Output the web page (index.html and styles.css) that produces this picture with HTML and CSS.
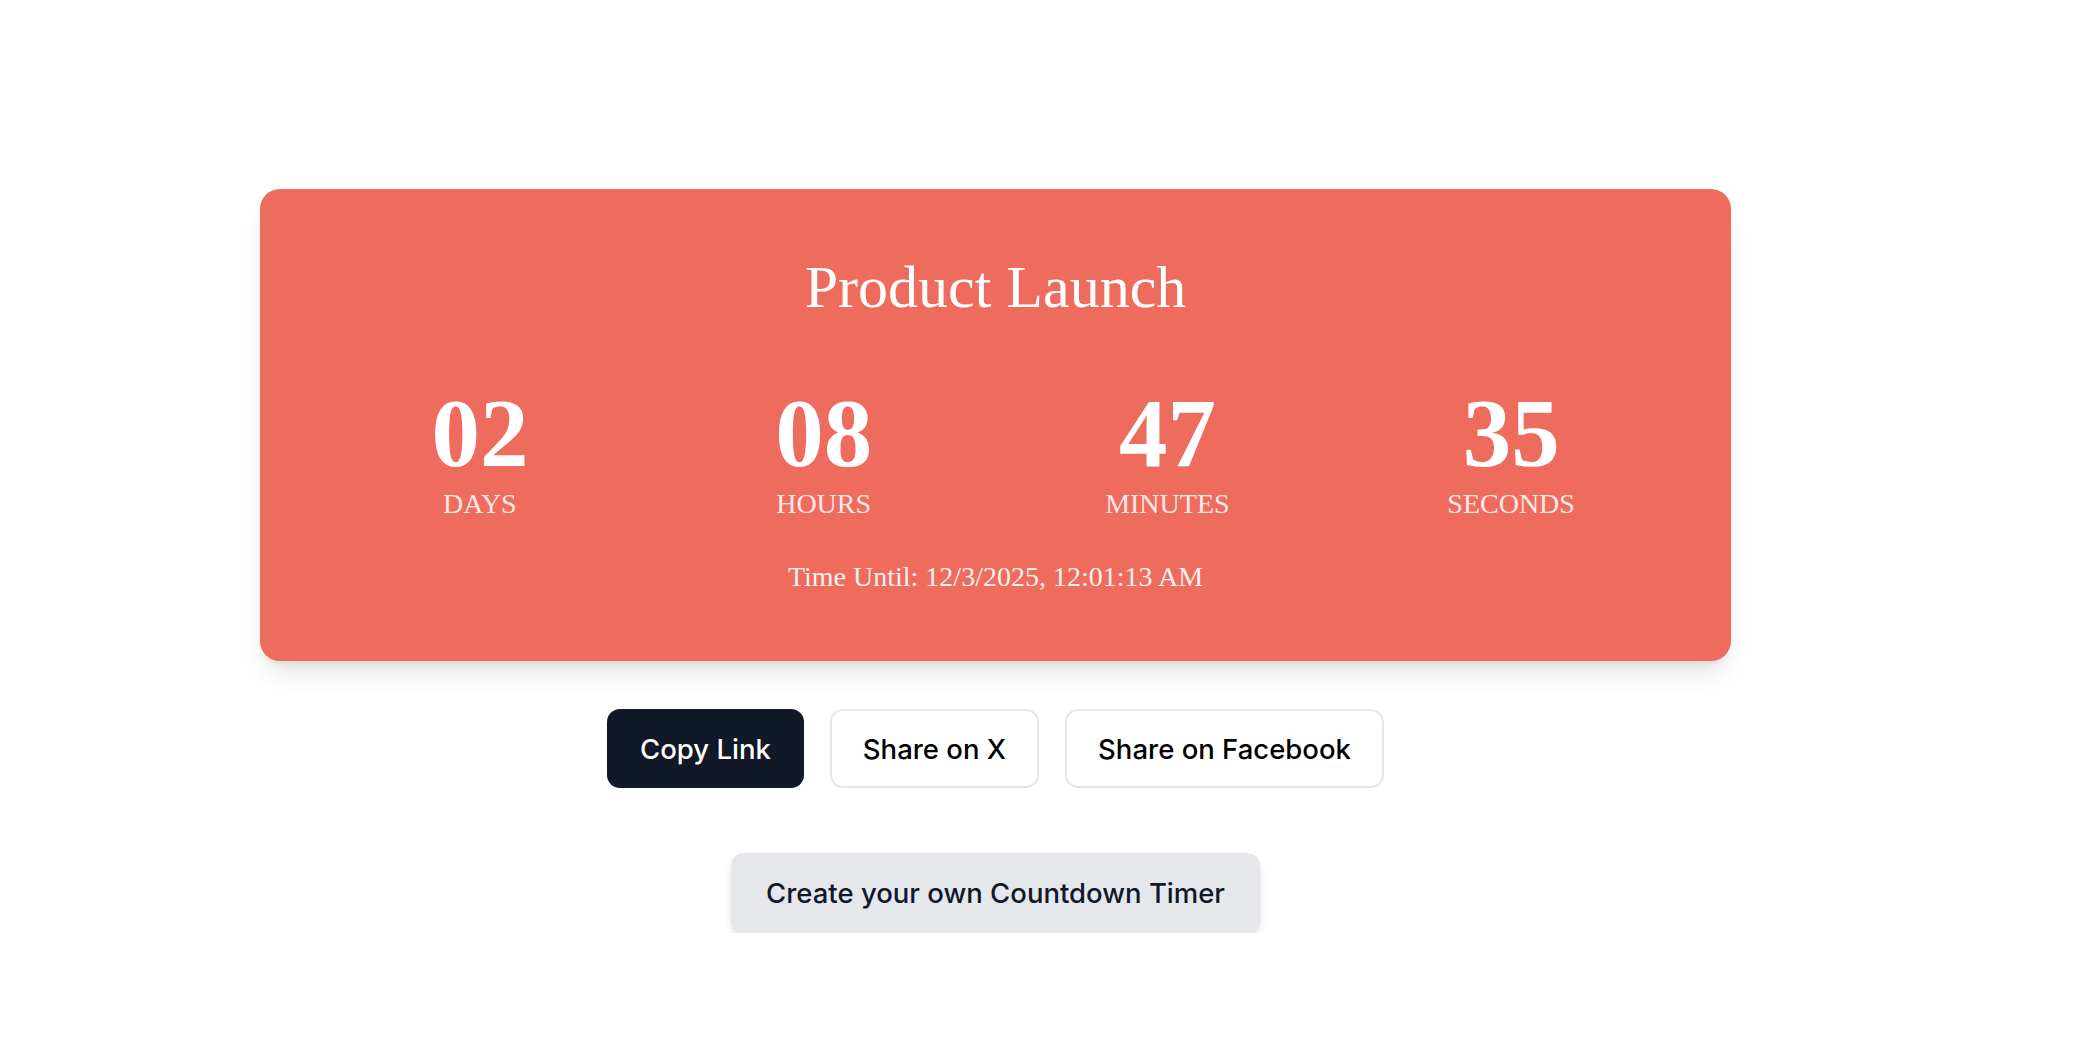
FILE: index.html
```html
<!DOCTYPE html>
<html lang="en">
<head>
    <meta charset="UTF-8">
    <meta name="viewport" content="width=device-width, initial-scale=1.0">
    <title>Product Launch Countdown</title>
    <link rel="stylesheet" href="styles.css">
</head>
<body>
    <div class="page">
        <div class="countdown-card">
            <h1 class="title">Product Launch</h1>

            <div class="units">
                <div class="unit">
                    <span class="value">02</span>
                    <span class="label">DAYS</span>
                </div>
                <div class="unit">
                    <span class="value">08</span>
                    <span class="label">HOURS</span>
                </div>
                <div class="unit">
                    <span class="value">47</span>
                    <span class="label">MINUTES</span>
                </div>
                <div class="unit">
                    <span class="value">35</span>
                    <span class="label">SECONDS</span>
                </div>
            </div>

            <p class="target">Time Until: 12/3/2025, 12:01:13 AM</p>
        </div>

        <div class="share-row">
            <button class="btn btn-dark">Copy Link</button>
            <button class="btn btn-outline">Share on X</button>
            <button class="btn btn-outline">Share on Facebook</button>
        </div>

        <a class="btn btn-create" href="#">Create your own Countdown Timer</a>
    </div>
</body>
</html>
```

FILE: styles.css
```css
body {
    margin: 0;
    padding: 0;
    background-color: white;
    font-family: Inter, "Liberation Sans", sans-serif;
}

.page {
    display: flex;
    flex-direction: column;
    align-items: center;
    padding: 189px 91px 0 0;
}

.countdown-card {
    width: 1471px;
    box-sizing: border-box;
    padding: 65px 80px 64px;
    background-color: #ee6c5d;
    border-radius: 20px;
    box-shadow: 0 17px 25px -5px rgba(0, 0, 0, 0.1), 0 7px 10px -6px rgba(0, 0, 0, 0.1);
    color: white;
    text-align: center;
    font-family: "Liberation Serif", "Times New Roman", serif;
}

.title {
    margin: 0 0 63px;
    font-size: 60px;
    line-height: 67px;
    font-weight: normal;
}

.units {
    display: grid;
    grid-template-columns: repeat(4, 1fr);
    gap: 64px;
}

.unit {
    display: flex;
    flex-direction: column;
}

.value {
    font-size: 97px;
    line-height: 100px;
    font-weight: bold;
}

.label {
    font-size: 28px;
    line-height: 40px;
    opacity: 0.85;
}

.target {
    margin: 33px 0 0;
    font-size: 28px;
    line-height: 40px;
    opacity: 0.9;
}

.share-row {
    display: flex;
    gap: 26px;
    margin-top: 48px;
}

.btn {
    font-family: Inter, "Liberation Sans", sans-serif;
    font-size: 27.5px;
    font-weight: 500;
    line-height: 40px;
    padding: 17.5px 31px;
    border: 2px solid transparent;
    border-radius: 13px;
    cursor: pointer;
    text-decoration: none;
}

.btn-dark {
    background-color: #111827;
    color: white;
}

.btn-outline {
    background-color: white;
    border-color: #e5e7eb;
    color: #000;
}

.btn-create {
    margin-top: 65px;
    padding: 18px 33px;
    background-color: #e5e7eb;
    color: #111827;
    box-shadow: 0 5px 8px -1px rgba(0, 0, 0, 0.12), 0 2px 4px -2px rgba(0, 0, 0, 0.1);
}
```
